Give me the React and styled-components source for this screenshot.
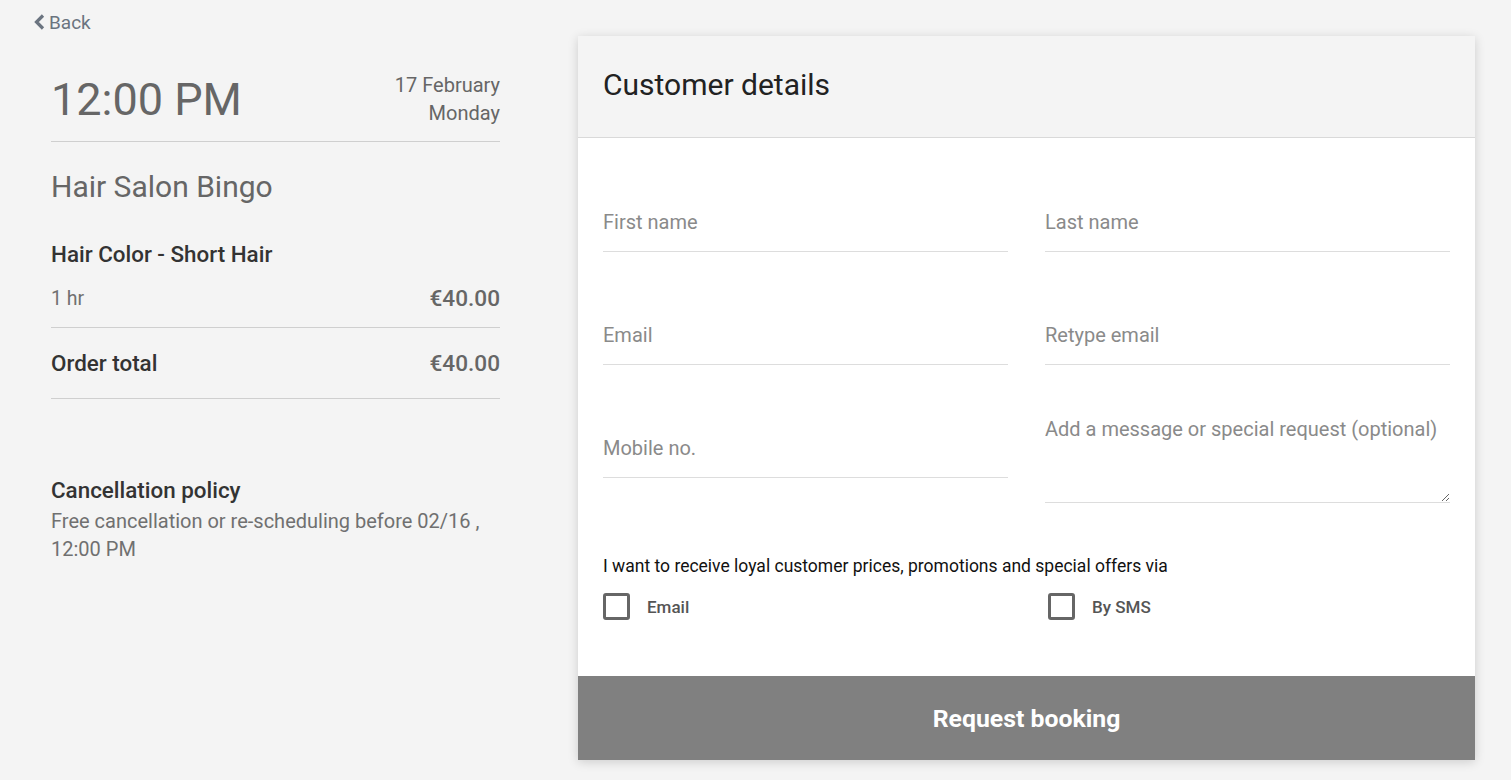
import React from "react";
import styled, { createGlobalStyle } from "styled-components";

const Global = createGlobalStyle`
  html, body { margin: 0; padding: 0; background: #f4f4f4; }
  body { font-family: Roboto, "Noto Sans", Arial, sans-serif; }
  * { box-sizing: border-box; }
`;

const Page = styled.div`
  display: flex;
  align-items: flex-start;
  padding: 0 36px 20px 33px;
  gap: 78px;
  height: 780px;
  overflow: hidden;
`;

const Side = styled.div`
  width: 467px;
  display: flex;
  flex-direction: column;
`;

const BackLink = styled.a`
  display: flex;
  align-items: center;
  gap: 4px;
  height: 44px;
  color: #6b7480;
  font-size: 19px;
  text-decoration: none;
  cursor: pointer;
`;

const Summary = styled.div`
  margin-left: 18px;
  display: flex;
  flex-direction: column;
`;

const TimeRow = styled.div`
  display: flex;
  justify-content: space-between;
  align-items: flex-start;
  padding-top: 26px;
  padding-bottom: 14px;
  border-bottom: 1px solid #cfcfcf;
`;

const Time = styled.div`
  font-size: 45px;
  color: #666;
  line-height: 54px;
  margin-top: 3px;
`;

const DateBlock = styled.div`
  text-align: right;
  font-size: 20px;
  line-height: 28px;
  color: #666;
  margin-top: 1px;
`;

const Salon = styled.div`
  font-size: 30px;
  color: #666;
  margin-top: 27px;
  line-height: 36px;
`;

const Service = styled.div`
  font-size: 22.4px;
  font-weight: 500;
  color: #333;
  margin-top: 34px;
  line-height: 30px;
`;

const Row = styled.div`
  display: flex;
  justify-content: space-between;
  align-items: center;
  height: ${(p) => p.$h}px;
  border-bottom: ${(p) => (p.$line ? "1px solid #cfcfcf" : "none")};
`;

const Muted = styled.span`
  font-size: 19.5px;
  color: #707070;
`;

const Strong = styled.span`
  font-size: 22.4px;
  font-weight: 500;
  color: #333;
`;

const Price = styled.span`
  font-size: 22.6px;
  font-weight: 500;
  color: #666;
`;

const PolicyTitle = styled.div`
  font-size: 22.4px;
  font-weight: 500;
  color: #333;
  margin-top: 76px;
  line-height: 30px;
`;

const PolicyText = styled.div`
  font-size: 20px;
  color: #707070;
  line-height: 28px;
  margin-top: 2px;
`;

const Card = styled.div`
  margin-top: 36px;
  width: 897px;
  background: #fff;
  box-shadow: 0 2px 10px rgba(0, 0, 0, 0.16);
  display: flex;
  flex-direction: column;
`;

const CardHeader = styled.div`
  height: 102px;
  background: #f4f4f4;
  border-bottom: 1px solid #d9d9d9;
  display: flex;
  align-items: center;
  padding: 0 25px 5px 25px;
  font-size: 30px;
  color: #222;
`;

const Form = styled.div`
  padding: 1px 25px 0 25px;
  display: grid;
  grid-template-columns: 1fr 1fr;
  column-gap: 37px;
`;

const Field = styled.div`
  height: 113px;
  display: flex;
  flex-direction: column;
  justify-content: flex-end;
`;

const Input = styled.input`
  border: none;
  border-bottom: 1px solid #ddd;
  height: 63px;
  font-family: inherit;
  font-size: 20px;
  color: #333;
  padding: 4px 0 0 0;
  outline: none;
  background: transparent;
  &::placeholder { color: #8a8a8a; }
`;

const TextAreaWrap = styled.div`
  height: 138px;
  display: flex;
  flex-direction: column;
  justify-content: flex-end;
`;

const TextArea = styled.textarea`
  border: none;
  border-bottom: 1px solid #ddd;
  height: 86px;
  font-family: inherit;
  font-size: 20px;
  padding: 0;
  outline: none;
  resize: vertical;
  background: transparent;
  &::placeholder { color: #8a8a8a; }
`;

const Consent = styled.div`
  padding: 53px 25px 0 25px;
  font-size: 17.5px;
  color: #111;
`;

const CheckRow = styled.div`
  display: grid;
  grid-template-columns: 1fr 1fr;
  column-gap: 37px;
  margin-top: 17px;
`;

const CheckLabel = styled.label`
  display: flex;
  align-items: center;
  gap: 17px;
  font-size: 17px;
  font-weight: 500;
  color: #555;
  margin-left: ${(p) => p.$offset || 0}px;
`;

const Box = styled.span`
  width: 27px;
  height: 27px;
  border: 3px solid #666;
  border-radius: 3px;
  display: inline-block;
`;

const Submit = styled.button`
  margin-top: 56px;
  height: 84px;
  border: none;
  background: #808080;
  color: #fff;
  font-family: inherit;
  font-size: 24.8px;
  font-weight: 700;
  cursor: pointer;
`;

const Chevron = () => (
  <svg width="12" height="16" viewBox="0 0 12 16" aria-hidden="true">
    <path d="M10 1.5 L3.5 8 L10 14.5" fill="none" stroke="#6b7480" strokeWidth="3.2" />
  </svg>
);

export default function App() {
  return (
    <>
      <Global />
      <Page>
        <Side>
          <BackLink>
            <Chevron />
            Back
          </BackLink>
          <Summary>
            <TimeRow>
              <Time>12:00 PM</Time>
              <DateBlock>
                17 February
                <br />
                Monday
              </DateBlock>
            </TimeRow>
            <Salon>Hair Salon Bingo</Salon>
            <Service>Hair Color - Short Hair</Service>
            <Row $h={59} $line>
              <Muted>1 hr</Muted>
              <Price>€40.00</Price>
            </Row>
            <Row $h={71} $line>
              <Strong>Order total</Strong>
              <Price>€40.00</Price>
            </Row>
            <PolicyTitle>Cancellation policy</PolicyTitle>
            <PolicyText>
              Free cancellation or re-scheduling before 02/16 ,
              <br />
              12:00 PM
            </PolicyText>
          </Summary>
        </Side>
        <Card>
          <CardHeader>Customer details</CardHeader>
          <Form>
            <Field>
              <Input placeholder="First name" />
            </Field>
            <Field>
              <Input placeholder="Last name" />
            </Field>
            <Field>
              <Input placeholder="Email" />
            </Field>
            <Field>
              <Input placeholder="Retype email" />
            </Field>
            <Field>
              <Input placeholder="Mobile no." />
            </Field>
            <TextAreaWrap>
              <TextArea placeholder="Add a message or special request (optional)" />
            </TextAreaWrap>
          </Form>
          <Consent>
            I want to receive loyal customer prices, promotions and special offers via
            <CheckRow>
              <CheckLabel>
                <Box />
                Email
              </CheckLabel>
              <CheckLabel $offset={3}>
                <Box />
                By SMS
              </CheckLabel>
            </CheckRow>
          </Consent>
          <Submit>Request booking</Submit>
        </Card>
      </Page>
    </>
  );
}
